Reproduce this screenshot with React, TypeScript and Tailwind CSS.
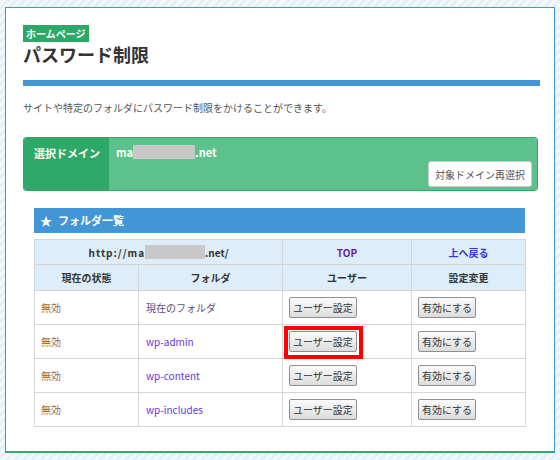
import React from "react";

const font = "font-['Noto_Sans_CJK_JP','Noto_Sans',sans-serif]";

function Btn({ children }: { children: React.ReactNode }) {
  return (
    <span className="inline-flex h-[21px] items-center rounded-[2px] border border-[#8f8f8f] bg-[linear-gradient(#fbfbfb,#dcdcdc)] px-[3px] text-[10px] leading-none text-[#333]">
      {children}
    </span>
  );
}

const rows = [
  { name: "現在のフォルダ", link: false },
  { name: "wp-admin", link: true, hl: true },
  { name: "wp-content", link: true },
  { name: "wp-includes", link: true },
];

export default function App() {
  return (
    <div
      className={`${font} h-[460px] w-[560px] overflow-hidden bg-[repeating-linear-gradient(-45deg,#e4f0f9_0px,#e4f0f9_3px,#f4f9fd_3px,#f4f9fd_6px)] pt-[7px]`}
    >
      <div className="ml-[5px] h-[446px] w-[550px] border-x border-t border-b-2 border-x-[#3f93d6] border-t-[#3f93d6] border-b-[#3aa76a] bg-white pl-[17px] pr-[14px] pt-[17px]">
        <div className="h-[17px] w-fit bg-[#2ea866] px-[3px] text-[10px] font-bold leading-[17px] text-white">
          ホームページ
        </div>
        <div className="text-[18px] font-bold leading-[24px] text-[#333]">パスワード制限</div>
        <div className="mt-[14px] h-[6px] bg-[#4196d6]" />
        <div className="mt-[14px] text-[10px] leading-[16px] text-[#555]">
          サイトや特定のフォルダにパスワード制限をかけることができます。
        </div>
        <div className="mr-[2px] mt-[21px] flex h-[54px] overflow-hidden rounded-[3px] border border-[#37a768]">
          <div className="w-[85px] shrink-0 bg-[#2ea866] pl-[10px] pt-[7px] text-[11px] font-bold leading-[16px] text-white">
            選択ドメイン
          </div>
          <div className="flex flex-1 flex-col bg-[#5cc18a] pl-[7px] pr-[5px] pt-[6px]">
            <div className="flex items-center text-[11px] font-bold leading-[16px] text-white">
              <span>ma</span>
              <span className="inline-block h-[14px] w-[62px] bg-[#c8c8c8]" />
              <span>.net</span>
            </div>
            <div className="mt-auto mb-[3px] flex justify-end">
              <span className="inline-flex h-[26px] items-center rounded-[3px] border border-[#ccc] bg-white px-[6px] text-[10px] text-[#555]">
                対象ドメイン再選択
              </span>
            </div>
          </div>
        </div>

        <div className="ml-[11px] mt-[17px] w-[491px]">
          <div className="flex h-[25px] items-center gap-[6px] bg-[#4296d5] pl-[6px] text-[11px] font-bold text-white">
            <span className="text-[12px] leading-none">★</span>
            <span>フォルダ一覧</span>
          </div>
          <table className="mt-[6px] w-[491px] table-fixed border-collapse text-[10px]">
            <colgroup>
              <col className="w-[104px]" />
              <col className="w-[144px]" />
              <col className="w-[129px]" />
              <col className="w-[114px]" />
            </colgroup>
            <tbody>
              <tr className="h-[25px] bg-[#ddedf9] font-bold">
                <td colSpan={2} className="border border-[#d6d6d6] text-center text-[#333]">
                  <span className="inline-flex items-center">
                    <span className="tracking-[1px]">http://ma</span>
                    <span className="inline-block h-[14px] w-[60px] bg-[#c8c8c8]" />
                    <span>.net/</span>
                  </span>
                </td>
                <td className="border border-[#d6d6d6] text-center text-[#6b1d8f]">TOP</td>
                <td className="border border-[#d6d6d6] text-center text-[#3b35d0]">上へ戻る</td>
              </tr>
              <tr className="h-[26px] bg-[#ddedf9] font-bold text-[#333]">
                <td className="border border-[#d6d6d6] text-center">現在の状態</td>
                <td className="border border-[#d6d6d6] text-center">フォルダ</td>
                <td className="border border-[#d6d6d6] text-center">ユーザー</td>
                <td className="border border-[#d6d6d6] text-center">設定変更</td>
              </tr>
              {rows.map((r) => (
                <tr key={r.name} className="h-[34px]">
                  <td className="border border-[#d6d6d6] pl-[6px] text-[#9a6b3e]">無効</td>
                  <td
                    className={`border border-[#d6d6d6] pl-[7px] ${r.link ? "text-[#6a35d8]" : "text-[#5c4a7a]"}`}
                  >
                    {r.name}
                  </td>
                  <td className="relative border border-[#d6d6d6] pl-[6px]">
                    <Btn>ユーザー設定</Btn>
                    {r.hl && (
                      <div className="absolute left-[1px] top-[1px] h-[33px] w-[79px] border-4 border-[#ff0000]" />
                    )}
                  </td>
                  <td className="border border-[#d6d6d6] pl-[6px]">
                    <Btn>有効にする</Btn>
                  </td>
                </tr>
              ))}
            </tbody>
          </table>
        </div>
      </div>
    </div>
  );
}
